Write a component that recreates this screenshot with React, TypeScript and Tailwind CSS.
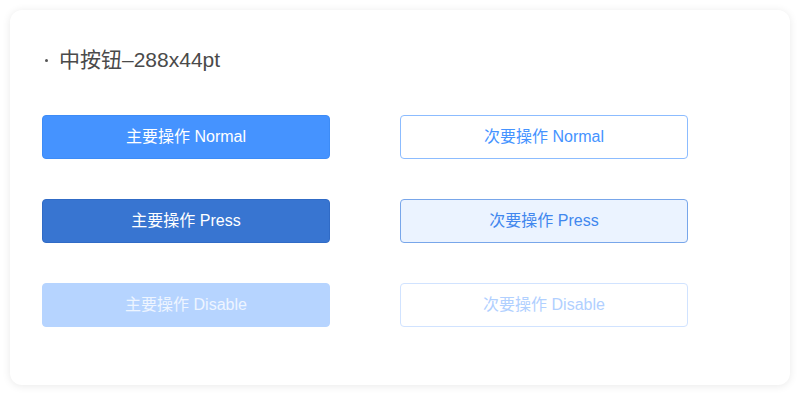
import React from "react";

const font = { fontFamily: '"Liberation Sans", "Noto Sans CJK SC", sans-serif' };

const rows = [
  {
    primary: "bg-[#4593ff] border-[#3d8cf7] text-white",
    secondary: "bg-white border-[#8cbcff] text-[#4593ff]",
    label: "Normal",
  },
  {
    primary: "bg-[#3875d1] border-[#306bc6] text-white",
    secondary: "bg-[#ebf3ff] border-[#78a6ea] text-[#4187ee]",
    label: "Press",
  },
  {
    primary: "bg-[#b6d4ff] border-[#b6d4ff] text-[#eef5ff]",
    secondary: "bg-white border-[#d1e3ff] text-[#b1d0ff]",
    label: "Disable",
  },
];

const App = () => {
  return (
    <div className="w-[800px] h-[400px] bg-white p-[10px]" style={font}>
      <div className="w-[780px] h-[375px] bg-white rounded-[12px] shadow-[0_1px_8px_rgba(0,0,0,0.09)] pl-[32px] pt-[37px]">
        <div className="flex items-center h-[26px] text-[21px] text-[#4a4a4a] leading-[26px]">
          <span className="w-[3px] h-[3px] rounded-full bg-[#555] ml-[3px] mr-[11px]"></span>
          <span>中按钮–288x44pt</span>
        </div>
        <div className="mt-[42px] flex flex-col gap-[40px]">
          {rows.map((r) => (
            <div key={r.label} className="flex gap-[70px]">
              <div
                className={`w-[288px] h-[44px] rounded-[4px] border flex items-center justify-center text-[16px] ${r.primary}`}
              >
                主要操作 {r.label}
              </div>
              <div
                className={`w-[288px] h-[44px] rounded-[4px] border flex items-center justify-center text-[16px] ${r.secondary}`}
              >
                次要操作 {r.label}
              </div>
            </div>
          ))}
        </div>
      </div>
    </div>
  );
};

export default App;
